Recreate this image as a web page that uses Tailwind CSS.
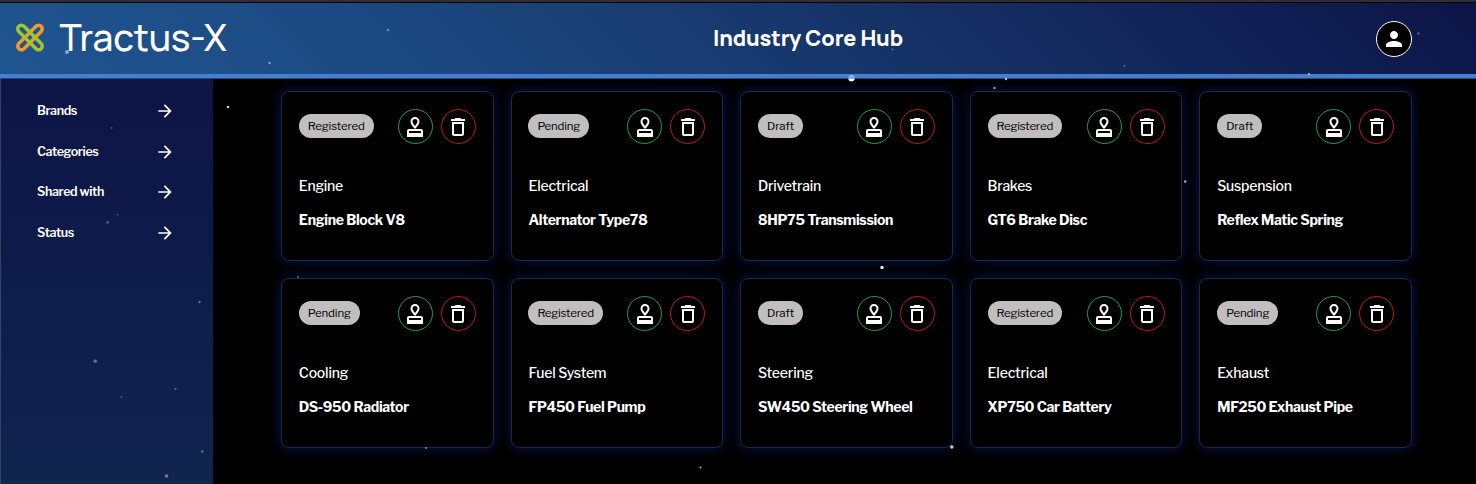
<!DOCTYPE html>
<html lang="en">
<head>
<meta charset="utf-8">
<title>Industry Core Hub</title>
<script src="https://cdn.jsdelivr.net/npm/@tailwindcss/browser@4"></script>
</head>
<body class="bg-black">
<svg class="hidden">
  <symbol id="arrow" viewBox="0 0 24 24"><path d="m12 4-1.41 1.41L16.17 11H4v2h12.17l-5.58 5.59L12 20l8-8z"/></symbol>
  <symbol id="stamp" viewBox="0 0 24 24"><path fill-rule="evenodd" d="M4 16v6h16v-6c0-1.1-.9-2-2-2H6c-1.1 0-2 .9-2 2m14 2H6v-2h12zM12 2C9.54 2 7.5 4.04 7.5 6.5c0 2.3 1.8 4.8 4.5 7.5 2.7-2.7 4.5-5.2 4.5-7.5C16.5 4.04 14.46 2 12 2m0 9c-.9-1.2-2.5-3-2.5-4.5a2.5 2.5 0 0 1 5 0C14.5 8 12.9 9.8 12 11"/></symbol>
  <symbol id="trash" viewBox="0 0 24 24"><path fill-rule="evenodd" d="M6 19c0 1.1.9 2 2 2h8c1.1 0 2-.9 2-2V7H6zM8 9h8v10H8zm7.5-5-1-1h-5l-1 1H5v2h14V4z"/></symbol>
</svg>
<div class="relative flex h-[484px] w-[1476px] flex-col overflow-hidden border-t-2 border-[#2f2e32] bg-black font-['Libre_Franklin','Inter',sans-serif] text-white">
  <header class="mt-px flex h-[76px] shrink-0 items-center border-b-[5px] border-[#4480cf] bg-[linear-gradient(45deg,#1f5590_0%,#1c4a83_25%,#17366b_55%,#101f54_85%,#0d1446_100%)]">
    <div class="flex w-[713px] shrink-0 items-center gap-[14px] pl-[13.5px]">
      <svg class="size-8" viewBox="0 0 32 32" fill="none" stroke-width="3.5">
        <rect x="-3.6" y="-15.8" width="7.2" height="31.6" rx="3.6" transform="translate(16 14.5) rotate(45)" stroke="#f29a2e"/>
        <rect x="-3.6" y="-15.8" width="7.2" height="31.6" rx="3.6" transform="translate(16 14.5) rotate(-45)" stroke="#a3c62c"/>
      </svg>
      <span class="-mt-[3px] h-12 font-[Manrope,Inter,sans-serif] text-[37px] leading-[48px] font-medium whitespace-nowrap" data-fit="167">Tractus-X</span>
    </div>
    <h1 class="-mt-0.5 font-[Manrope,Inter,sans-serif] text-[21.5px] leading-8 font-extrabold whitespace-nowrap" data-fit="190">Industry Core Hub</h1>
    <div class="flex flex-1 justify-end pr-16">
      <div class="flex size-9 items-center justify-center rounded-full border border-white bg-black">
        <svg class="size-6 fill-white" viewBox="0 0 24 24"><path d="M12 12c2.21 0 4-1.79 4-4s-1.79-4-4-4-4 1.79-4 4 1.790 4 4 4m0 2c-2.67 0-8 1.340-8 4v2h16v-2c0-2.660-5.330-4-8-4"/></svg>
      </div>
    </div>
  </header>
  <div class="flex min-h-0 flex-1">
    <aside class="w-[213px] shrink-0 border-l border-[#35436b] bg-linear-to-b from-[#0d1446] to-[#10244e] pt-3">
      <nav id="nav"></nav>
    </aside>
    <main id="cards" class="ml-[68px] mt-3 grid h-[357px] w-[1131px] grid-cols-5 grid-rows-2 gap-[17px]"></main>
  </div>
  <svg id="stars" class="pointer-events-none absolute -top-0.5 left-0 h-[484px] w-[1476px]" viewBox="0 0 1476 484"></svg>
</div>
<script>
const nav = [['Brands',40],['Categories',61.5],['Shared with',67],['Status',37]];
document.getElementById('nav').innerHTML = nav.map(([t,w]) => `
  <a class="flex h-[40.6px] items-center justify-between pl-9 pr-[38px]">
    <span class="text-[12.5px] font-semibold whitespace-nowrap" data-fit="${w}">${t}</span>
    <svg class="size-5 fill-white"><use href="#arrow"/></svg>
  </a>`).join('');

const cards = [
  ['Registered',57,'Engine',44,'Engine Block V8',106],
  ['Pending',42.5,'Electrical',60,'Alternator Type78',119],
  ['Draft',27,'Drivetrain',63,'8HP75 Transmission',135],
  ['Registered',56.5,'Brakes',44.5,'GT6 Brake Disc',99.5],
  ['Draft',27,'Suspension',74.5,'Reflex Matic Spring',126],
  ['Pending',43,'Cooling',49.5,'DS-950 Radiator',110],
  ['Registered',56.5,'Fuel System',78,'FP450 Fuel Pump',117],
  ['Draft',27,'Steering',55,'SW450 Steering Wheel',154.5],
  ['Registered',56.5,'Electrical',60,'XP750 Car Battery',124],
  ['Pending',43,'Exhaust',52,'MF250 Exhaust Pipe',135.5]
];
document.getElementById('cards').innerHTML = cards.map(([s,sw,c,cw,n,nw]) => `
  <article class="rounded-lg border border-[#152a4c] bg-black pr-[16.9px] pl-[16.8px] pt-[17px] shadow-[0_0_12px_2px_rgba(15,30,110,0.5)]">
    <div class="flex h-[35px] items-center gap-2">
      <span class="-mt-px mr-auto flex h-6 items-center rounded-full bg-[#c0bebf] px-[9px] pt-px text-[11.5px] whitespace-nowrap text-black"><span data-fit="${sw}">${s}</span></span>
      <span class="flex size-[35px] items-center justify-center rounded-full border border-[#219e49]"><svg class="size-6 fill-white"><use href="#stamp"/></svg></span>
      <span class="flex size-[35px] items-center justify-center rounded-full border border-[#c5151f]"><svg class="size-6 fill-white"><use href="#trash"/></svg></span>
    </div>
    <p class="mt-[31px] text-sm leading-[22px] font-medium whitespace-nowrap"><span data-fit="${cw}">${c}</span></p>
    <p class="mt-3 text-sm leading-[22px] font-bold whitespace-nowrap"><span data-fit="${nw}">${n}</span></p>
  </article>`).join('');

// [x, y, radius, opacity, colour]
const stars = [
  [67,52,2,.8,'#8fc0ff'],[228,107,1.3,.8],[111.5,128,.9,.25],[117.5,214.5,.9,.25],[107.5,222.5,1.4,.28],
  [199.5,302,1.2,.35],[95.3,361.3,1.8,.35],[175.5,389,1.1,.35],[121.5,397,1.2,.2],[202.3,451.5,1.2,.35],[166.5,476,1.8,.4],
  [851.5,78,3.2,1,'#79b0ff'],[892.5,49.5,1,.3],[1418.5,33.5,1.2,.3],[1309,74,1.2,.5],[1185.2,181.5,1.2,.7],
  [882,267.5,1.7,.9],[951.8,447,1.7,.8],[700.5,467.5,1,.7],[426,448,1,.5],[388,30,1.2,.4],[269.5,63,1.2,.5],
  [994.5,88,1.2,.6],[1006,79,1.2,.7],[1124.5,66,1,.3],[298,277,1,.4]
];
document.getElementById('stars').innerHTML = '<path d="M0 78.500h1476" stroke="#0d1c40" stroke-opacity=".55"/>' +
  stars.map(([x,y,r,o,c]) => `<circle cx="${x}" cy="${y}" r="${r}" fill="${c || '#fff'}" opacity="${o}"/>`).join('') +
  '<path d="M848.4 79a3.2 3.2 0 0 0 6.2 0z" fill="#fff"/>';

// Tracks each label so that it fills its designed width.
function fitLabels() {
  document.querySelectorAll('[data-fit]').forEach(el => {
    el.style.letterSpacing = '0px';
    const range = document.createRange();
    range.selectNodeContents(el);
    const gap = (el.dataset.fit - range.getBoundingClientRect().width) / el.textContent.length;
    el.style.letterSpacing = Math.max(-1.5, Math.min(1.5, gap)).toFixed(3) + 'px';
  });
}
window.addEventListener('load', () => { fitLabels(); document.fonts.ready.then(fitLabels); setTimeout(fitLabels, 50); });
</script>
</body>
</html>
